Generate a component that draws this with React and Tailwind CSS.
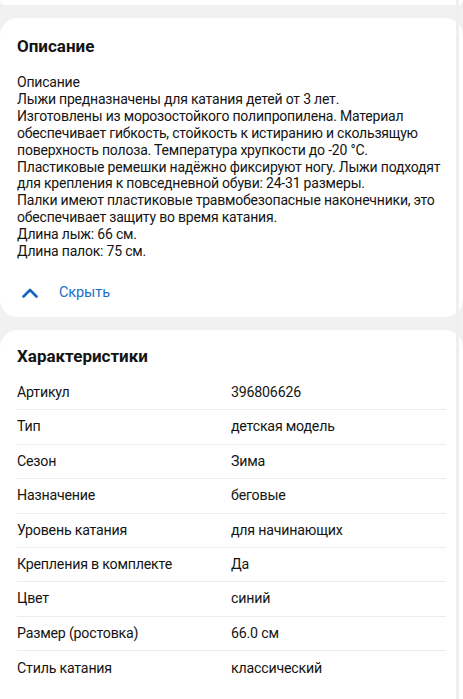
const DESCRIPTION = [
  'Описание',
  'Лыжи предназначены для катания детей от 3 лет.',
  'Изготовлены из морозостойкого полипропилена. Материал обеспечивает гибкость, стойкость к истиранию и скользящую поверхность полоза. Температура хрупкости до -20 °C.',
  'Пластиковые ремешки надёжно фиксируют ногу. Лыжи подходят для крепления к повседневной обуви: 24-31 размеры.',
  'Палки имеют пластиковые травмобезопасные наконечники, это обеспечивает защиту во время катания.',
  'Длина лыж: 66 см.',
  'Длина палок: 75 см.',
];

const SPECS = [
  ['Артикул', '396806626'],
  ['Тип', 'детская модель'],
  ['Сезон', 'Зима'],
  ['Назначение', 'беговые'],
  ['Уровень катания', 'для начинающих'],
  ['Крепления в комплекте', 'Да'],
  ['Цвет', 'синий'],
  ['Размер (ростовка)', '66.0 см'],
  ['Стиль катания', 'классический'],
];

export default function App() {
  return (
    <div
      className="relative w-[463px] h-[699px] overflow-hidden bg-[#f1f1f1] text-[#141414]"
      style={{ fontFamily: 'Roboto, "Noto Sans", sans-serif' }}
    >
      <div className="h-[5px] bg-white rounded-b-[18px]" />

      {/* описание */}
      <div className="mt-[13px] bg-white rounded-[18px] pt-[17px] pb-[4px] px-[17px]">
        <h2 className="text-[17px] leading-[22px] font-bold">Описание</h2>
        <div className="mt-[17px] text-[14px] leading-[16.9px] tracking-[-0.2px]">
          {DESCRIPTION.map((line, i) => (
            <div key={i}>{line}</div>
          ))}
        </div>
        <button type="button" className="mt-[13px] h-[40px] flex items-center gap-[21px] pl-[5px] text-[#1a6fca] text-[14.5px] tracking-[-0.1px]">
          <svg width="16" height="10" viewBox="0 0 16 10" fill="none">
            <path d="M1.5 8.5L8 2L14.5 8.5" stroke="#1565c0" strokeWidth="2.6" strokeLinecap="round" strokeLinejoin="round" />
          </svg>
          <span>Скрыть</span>
        </button>
      </div>

      {/* характеристики */}
      <div className="mt-[13px] bg-white rounded-t-[18px] pt-[15px] px-[17px] pb-[40px]">
        <h2 className="text-[17px] leading-[22px] font-bold">Характеристики</h2>
        <div className="mt-[9px]">
          {SPECS.map(([k, v], i) => (
            <div
              key={k}
              className={`h-[34.4px] flex items-center text-[14.2px] tracking-[-0.2px] ${i < SPECS.length - 1 ? 'border-b border-[#ececec]' : ''}`}
            >
              <div className="w-[214px] shrink-0">{k}</div>
              <div>{v}</div>
            </div>
          ))}
        </div>
      </div>

      <div className="absolute top-0 right-[4px] w-[3px] h-full bg-[#efefef]" />
    </div>
  );
}
